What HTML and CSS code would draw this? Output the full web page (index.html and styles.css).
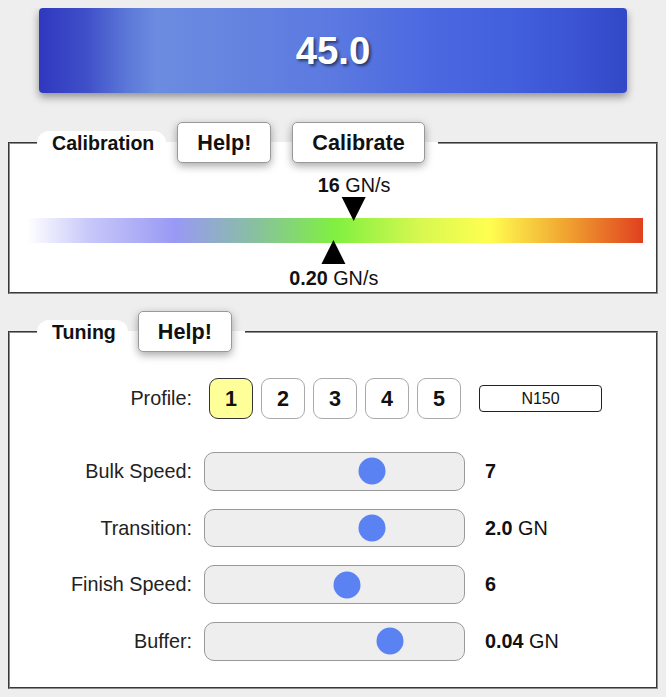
FILE: index.html
```html
<!DOCTYPE html>
<html>
<head>
<meta charset="utf-8">
<title>Scale</title>
<link rel="stylesheet" href="styles.css">
</head>
<body>
<div class="banner"><span class="reading">45.0</span></div>

<fieldset class="panel calib">
  <legend class="legend">
    <span class="tab">Calibration</span>
    <button class="btn btn-first">Help!</button>
    <button class="btn btn-second">Calibrate</button>
  </legend>
  <div class="scale">
    <div class="marker marker-high" style="left:53.1%">
      <div class="mlabel"><b>16</b> GN/s</div>
      <div class="tri tri-down"></div>
    </div>
    <div class="marker marker-low" style="left:49.8%">
      <div class="tri tri-up"></div>
      <div class="mlabel"><b>0.20</b> GN/s</div>
    </div>
  </div>
</fieldset>

<fieldset class="panel tuning">
  <legend class="legend">
    <span class="tab">Tuning</span>
    <button class="btn btn-tune">Help!</button>
  </legend>
  <div class="rows">
    <div class="row row-profile">
      <div class="label">Profile:</div>
      <div class="profiles">
        <button class="pbtn pbtn-active">1</button>
        <button class="pbtn">2</button>
        <button class="pbtn">3</button>
        <button class="pbtn">4</button>
        <button class="pbtn">5</button>
        <div class="pname">N150</div>
      </div>
    </div>
    <div class="row">
      <div class="label">Bulk Speed:</div>
      <div class="track"><span class="thumb" style="left:64.4%"></span></div>
      <div class="value"><b>7</b></div>
    </div>
    <div class="row">
      <div class="label">Transition:</div>
      <div class="track"><span class="thumb" style="left:64.4%"></span></div>
      <div class="value"><b>2.0</b> GN</div>
    </div>
    <div class="row">
      <div class="label">Finish Speed:</div>
      <div class="track"><span class="thumb" style="left:54.8%"></span></div>
      <div class="value"><b>6</b></div>
    </div>
    <div class="row">
      <div class="label">Buffer:</div>
      <div class="track"><span class="thumb" style="left:71.3%"></span></div>
      <div class="value"><b>0.04</b> GN</div>
    </div>
  </div>
</fieldset>
</body>
</html>
```

FILE: styles.css
```css
html, body {
  background: #eeeeee;
}
body {
  margin: 8px;
  font-family: "Liberation Sans", Arial, sans-serif;
  color: #111;
  font-size: 19.8px;
}

.banner {
  margin: 0 31px;
  height: 85px;
  border-radius: 4px;
  display: flex;
  align-items: center;
  justify-content: center;
  background: linear-gradient(90deg, #2f38bf 0%, #3f4fc8 8%, #5c78d8 15%, #6c8ce0 20%, #6483e0 35%, #5b79e0 50%, #4b67e0 68%, #4360dd 80%, #3a53d2 92%, #3248c6 100%);
  box-shadow: 0 4px 9px rgba(0, 0, 0, 0.4);
}
.reading {
  color: #fff;
  font-weight: bold;
  font-size: 38.4px;
  text-shadow: 2px 2px 3px rgba(0, 0, 0, 0.55);
}

.panel {
  margin: 0;
  padding: 0;
  border: 2px groove #8c8c8c;
  background: #fff;
  min-width: 0;
}
.calib {
  margin-top: 29px;
}
.tuning {
  margin-top: 17px;
}

.legend {
  margin-left: 27px;
  padding: 0 13px 0 0;
  display: flex;
  align-items: flex-end;
  height: 41px;
}
.tab {
  background: #fff;
  height: 32px;
  box-sizing: border-box;
  padding: 1px 12px 0 15px;
  border-radius: 12px 12px 0 0;
  font-weight: bold;
  font-size: 19.6px;
  line-height: 22px;
}
.btn {
  align-self: stretch;
  height: 41px;
  padding: 0 19px;
  background: #fff;
  border: 1px solid #999;
  border-radius: 5px;
  box-shadow: 0 3px 8px rgba(0, 0, 0, 0.35);
  font-family: "Liberation Sans", Arial, sans-serif;
  font-weight: bold;
  font-size: 21.6px;
  color: #111;
}
.btn-first {
  margin-left: 11px;
}
.btn-second {
  margin-left: 21px;
}
.btn-tune {
  margin-left: 10px;
}

.scale {
  position: relative;
  height: 25px;
  margin: 55px 13px 49px 17px;
  background: linear-gradient(90deg, rgba(255,255,255,1) 0%, #c8c8fa 10%, #9999f5 24%, #88c0a0 37%, #80f040 50%, #d8f850 64%, #ffff50 75%, #f0a030 88%, #e04020 100%);
}
.marker {
  position: absolute;
  display: flex;
  flex-direction: column;
  align-items: center;
  transform: translateX(-50%);
  white-space: nowrap;
}
.marker-high {
  bottom: calc(100% - 3px);
}
.marker-low {
  top: calc(100% - 3px);
}
.mlabel {
  line-height: 22px;
  font-size: 19.8px;
}
.marker-high .mlabel {
  margin-bottom: 1px;
}
.marker-low .mlabel {
  margin-top: 3px;
}
.tri {
  width: 0;
  height: 0;
  border-left: 12px solid transparent;
  border-right: 12px solid transparent;
}
.tri-down {
  border-top: 24px solid #000;
}
.tri-up {
  border-bottom: 24px solid #000;
}

.rows {
  padding: 26px 0 26px 0;
}
.row {
  display: flex;
  align-items: center;
  margin-bottom: 18px;
}
.row:last-child {
  margin-bottom: 0;
}
.row-profile {
  margin-bottom: 33px;
}
.label {
  width: 182px;
  text-align: right;
  margin-right: 12px;
  color: #222;
}
.profiles {
  display: flex;
  align-items: center;
  margin-left: 5px;
}
.pbtn {
  width: 44px;
  height: 41px;
  margin-right: 8px;
  padding: 0;
  background: #fff;
  border: 1.5px solid #aaa;
  border-radius: 9px;
  font-family: "Liberation Sans", Arial, sans-serif;
  font-weight: bold;
  font-size: 21.6px;
  color: #111;
}
.pbtn-active {
  background: #ffff99;
  border-color: #333;
}
.pname {
  margin-left: 10px;
  width: 123px;
  height: 27px;
  box-sizing: border-box;
  border: 1.5px solid #222;
  border-radius: 4px;
  background: #fff;
  font-size: 16px;
  display: flex;
  align-items: center;
  justify-content: center;
}
.track {
  position: relative;
  width: 261px;
  height: 38.7px;
  box-sizing: border-box;
  background: #eeeeee;
  border: 1.5px solid #999;
  border-radius: 10px;
}
.thumb {
  position: absolute;
  top: 50%;
  width: 27px;
  height: 27px;
  border-radius: 50%;
  background: #5b82f2;
  transform: translate(-50%, -50%);
}
.value {
  margin-left: 20px;
}
```
